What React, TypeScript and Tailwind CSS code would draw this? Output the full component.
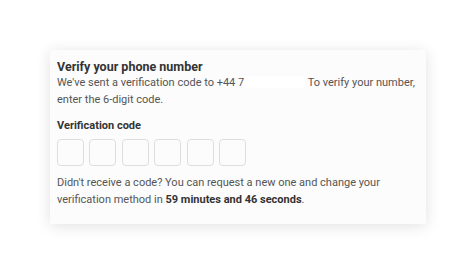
import React from "react";

export default function App() {
  return (
    <div className="w-[476px] h-[275px] bg-white overflow-hidden" style={{ fontFamily: "Roboto, 'Liberation Sans', sans-serif" }}>
      <div className="ml-[50px] mt-[50px] w-[376px] h-[174px] bg-[#fcfcfc] shadow-[0_2px_14px_rgba(0,0,0,0.12)] px-[7px] pt-[8px]">
        <h1 className="text-[12.5px] leading-[17px] font-bold text-[#333]">Verify your phone number</h1>
        <p className="text-[11px] leading-[16.5px] text-[#555]">
          We've sent a verification code to +44 7
          <span className="inline-block w-[61px] h-[12px] bg-white align-[-2px]"></span>
          {" "}To verify your number,
          <br />
          enter the 6-digit code.
        </p>
        <div className="mt-[10px] text-[11px] leading-[16px] font-bold text-[#333]">Verification code</div>
        <div className="mt-[5px] flex gap-[5.4px]">
          {[0, 1, 2, 3, 4, 5].map((i) => (
            <div key={i} className="w-[27px] h-[27px] rounded-[4px] border border-[#dedede] bg-[#fcfcfc]"></div>
          ))}
        </div>
        <p className="mt-[9px] text-[11px] leading-[16.5px] text-[#555]">
          Didn't receive a code? You can request a new one and change your
          <br />
          verification method in <span className="font-bold text-[#333]">59 minutes and 46 seconds</span>.
        </p>
      </div>
    </div>
  );
}
